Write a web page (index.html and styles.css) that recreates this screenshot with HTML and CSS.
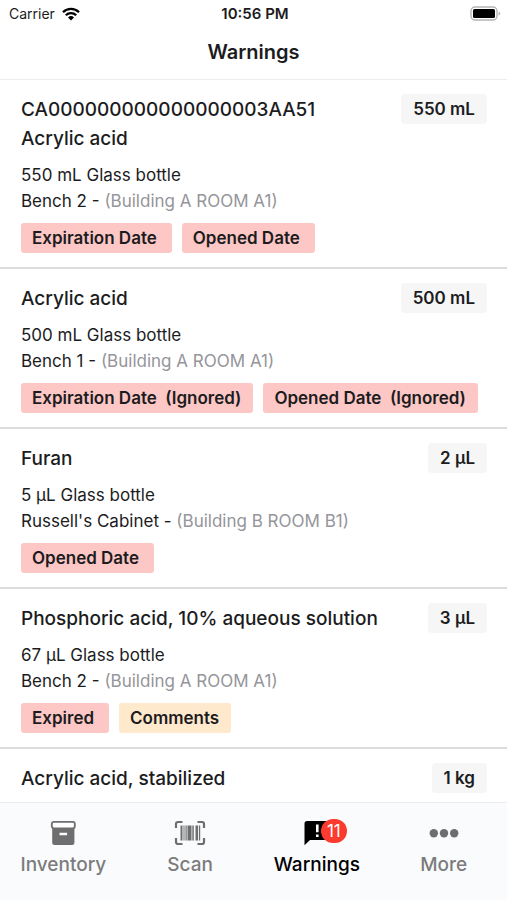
FILE: index.html
```html
<!DOCTYPE html>
<html lang="en">
<head>
<meta charset="utf-8">
<meta name="viewport" content="width=device-width, initial-scale=1">
<title>Warnings</title>
<link rel="stylesheet" href="styles.css">
</head>
<body>
<div class="status">
  <span class="carrier">Carrier
    <svg width="20" height="14" viewBox="0 0 18 14" aria-hidden="true"><g fill="none" stroke="#000" stroke-width="2.3"><path d="M1 5.2A11.4 11.4 0 0 1 17 5.2"/><path d="M3.8 8.3A7.4 7.4 0 0 1 14.2 8.3"/></g><path d="M6 10.4a4.3 4.3 0 0 1 6 0L9 13.6z"/></svg>
  </span>
  <span class="clock">10:56 PM</span>
  <span class="battery"><svg width="31" height="16" viewBox="0 0 31 16" aria-hidden="true"><rect x="1" y="1" width="26" height="13" rx="4" fill="#fff" stroke="#b4b4b4" stroke-width="1.4"/><rect x="3" y="3" width="22" height="9" rx="1.5"/><path d="M28.6 5.5c2.2.8 2.2 3.400 0 4.200z" fill="#b4b4b4"/></svg></span>
</div>
<header class="header"><h1>Warnings</h1></header>
<main class="list">
  <article class="item">
    <div class="top"><h2>CA000000000000000003AA51<br>Acrylic acid</h2><span class="amount">550 mL</span></div>
    <p class="meta">550 mL Glass bottle<br>Bench 2 - <span class="room">(Building A ROOM A1)</span></p>
    <div class="tags"><span class="tag">Expiration Date</span><span class="tag">Opened Date</span></div>
  </article>
  <article class="item">
    <div class="top"><h2>Acrylic acid</h2><span class="amount">500 mL</span></div>
    <p class="meta">500 mL Glass bottle<br>Bench 1 - <span class="room">(Building A ROOM A1)</span></p>
    <div class="tags"><span class="tag ignored">Expiration Date&nbsp; (Ignored)</span><span class="tag ignored">Opened Date&nbsp; (Ignored)</span></div>
  </article>
  <article class="item">
    <div class="top"><h2>Furan</h2><span class="amount">2 µL</span></div>
    <p class="meta">5 µL Glass bottle<br>Russell's Cabinet - <span class="room">(Building B ROOM B1)</span></p>
    <div class="tags"><span class="tag">Opened Date</span></div>
  </article>
  <article class="item">
    <div class="top"><h2>Phosphoric acid, 10% aqueous solution</h2><span class="amount">3 µL</span></div>
    <p class="meta">67 µL Glass bottle<br>Bench 2 - <span class="room">(Building A ROOM A1)</span></p>
    <div class="tags"><span class="tag">Expired</span><span class="tag note">Comments</span></div>
  </article>
  <article class="item">
    <div class="top"><h2>Acrylic acid, stabilized</h2><span class="amount">1 kg</span></div>
  </article>
</main>
<nav class="tabs">
  <a class="tab" href="#inventory">
    <svg width="32" height="28" viewBox="0 0 32 28" aria-hidden="true"><rect x="4.800" y="2.800" width="23" height="6.500" rx="2" fill="#fff" stroke="#6e6e6e" stroke-width="1.800"/><path fill="#6e6e6e" fill-rule="evenodd" d="M5.200 9h22.200v14.500a2.500 2.500 0 0 1-2.500 2.500H7.700a2.500 2.500 0 0 1-2.500-2.500zM12.500 13.800v2.400h7.600v-2.400z"/></svg>
    <span>Inventory</span>
  </a>
  <a class="tab" href="#scan">
    <svg width="32" height="28" viewBox="0 0 32 28" aria-hidden="true"><path fill="none" stroke="#6e6e6e" stroke-width="2.200" d="M2 9V5a2 2 0 0 1 2-2H8.500M23.500 3H28a2 2 0 0 1 2 2V9M30 19v4a2 2 0 0 1-2 2H23.500M8.500 25H4a2 2 0 0 1-2-2V19"/><path fill="#6e6e6e" d="M6.500 6.500h2v15h-2zM9.500 6.500h1v15h-1zM11.500 6.500h1.200v15h-1.200zM13.500 6.500h4v15h-4zM18.300 6.500h1.500v15h-1.500zM21.500 6.500h2.600v15h-2.600zM25 6.500h1.200v15H25z"/></svg>
    <span>Scan</span>
  </a>
  <a class="tab active" href="#warnings" aria-current="page">
    <span class="icon">
      <svg width="32" height="28" viewBox="0 0 32 28" aria-hidden="true"><path d="M6 2h21a2 2 0 0 1 2 2v15a2 2 0 0 1-2 2H9l-5.500 5.300V4.500A2.500 2.500 0 0 1 6 2z"/><path fill="#fff" d="M15 5.500h2.600v7.700H15zM15 15.500h2.600v2.600H15z"/></svg>
      <span class="count">11</span>
    </span>
    <span>Warnings</span>
  </a>
  <a class="tab" href="#more">
    <svg width="32" height="28" viewBox="0 0 32 28" fill="#6e6e6e" aria-hidden="true"><circle cx="5.800" cy="14.300" r="4.200"/><circle cx="16" cy="14.300" r="4.200"/><circle cx="26.200" cy="14.300" r="4.200"/></svg>
    <span>More</span>
  </a>
</nav>
</body>
</html>
```

FILE: styles.css
```css
* { box-sizing: border-box; }

body {
  margin: 0;
  height: 100vh;
  display: flex;
  flex-direction: column;
  background: #fff;
  color: #1c1c1e;
  font-family: Inter, "Liberation Sans", sans-serif;
}

h1, h2, p { margin: 0; }

.status {
  display: grid;
  grid-template-columns: 1fr auto 1fr;
  align-items: center;
  height: 27px;
  padding: 0 6px 0 9px;
  font-size: 14px;
}

.carrier {
  display: flex;
  align-items: center;
  gap: 6px;
}

.clock {
  font-size: 15px;
  font-weight: 600;
}

.battery {
  display: flex;
  justify-content: flex-end;
}

.header {
  height: 53px;
  border-bottom: 1px solid #ececec;
  text-align: center;
}

h1 {
  font-size: 20px;
  line-height: 50px;
  font-weight: 600;
}

.list {
  flex: 1;
  min-height: 0;
  overflow: hidden;
}

.item {
  padding: 14px 20px 14px 21px;
  border-bottom: 2px solid #dcdcdc;
}

.top {
  display: flex;
  justify-content: space-between;
  align-items: flex-start;
}

h2 {
  padding-top: 1px;
  font-size: 19px;
  line-height: 29px;
  font-weight: 500;
}

.amount {
  padding: 0 12px;
  border-radius: 4px;
  background: #f6f6f6;
  font-size: 17px;
  line-height: 30px;
  font-weight: 600;
}

.meta {
  margin: 9px 0;
  font-size: 17px;
  line-height: 26px;
}

.room { color: #95959a; }

.tags {
  display: flex;
  gap: 10px;
}

.tag {
  padding: 0 15px 0 11px;
  border-radius: 3px;
  background: #fdc7c5;
  font-size: 17px;
  line-height: 30px;
  font-weight: 600;
  white-space: nowrap;
}

.ignored { padding-right: 12px; }

.note {
  padding-right: 12px;
  background: #ffe9cc;
}

.tabs {
  display: grid;
  grid-template-columns: repeat(4, 1fr);
  height: 98px;
  border-top: 1px solid #ececec;
  background: #fafbfd;
}

.tab {
  display: flex;
  flex-direction: column;
  align-items: center;
  padding-top: 16px;
  color: #7c7c7c;
  font-size: 19px;
  line-height: 35px;
  font-weight: 500;
  text-decoration: none;
}

.active { color: #000; }

.icon {
  position: relative;
  display: flex;
}

.count {
  position: absolute;
  top: 0;
  left: 20px;
  width: 26px;
  border-radius: 12px;
  background: #fc3b30;
  color: #fff;
  font-size: 17px;
  line-height: 24px;
  font-weight: 400;
  text-align: center;
}
```
